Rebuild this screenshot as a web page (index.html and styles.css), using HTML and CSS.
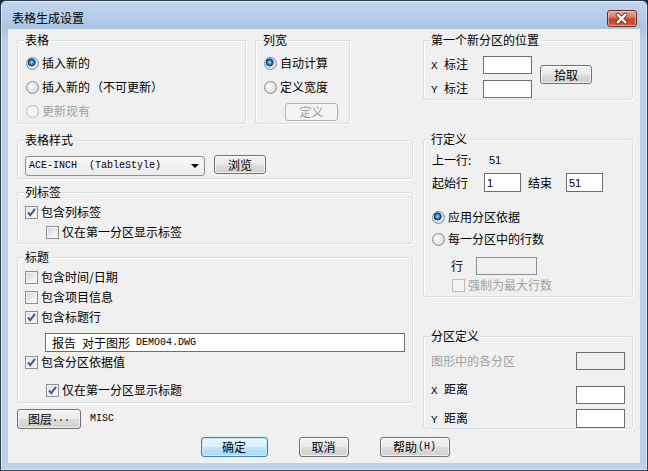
FILE: index.html
```html
<!DOCTYPE html>
<html lang="zh-CN">
<head>
<meta charset="utf-8">
<title>表格生成设置</title>
<link rel="stylesheet" href="styles.css">
</head>
<body>
<div class="window">
  <div class="titlebar">
    <span class="title">表格生成设置</span>
    <div class="close">
      <svg width="30" height="17" viewBox="0 0 30 17">
        <path d="M11 4.5 L19 12.5 M19 4.5 L11 12.5" stroke="#5b2a22" stroke-width="4.2" stroke-linecap="round"/>
        <path d="M11 4.5 L19 12.5 M19 4.5 L11 12.5" stroke="#ffffff" stroke-width="2.4" stroke-linecap="round"/>
      </svg>
    </div>
  </div>
  <div class="client">
    <div class="main">
      <div class="left">
        <div class="toprow">
          <div class="group g-table">
            <span class="legend">表格</span>
            <div class="opt"><span class="radio on"></span>插入新的</div>
            <div class="opt"><span class="radio"></span>插入新的<span class="paren">（不可更新）</span></div>
            <div class="opt dis"><span class="radio"></span>更新现有</div>
          </div>
          <div class="group g-colw">
            <span class="legend">列宽</span>
            <div class="opt"><span class="radio on"></span>自动计算</div>
            <div class="opt"><span class="radio"></span>定义宽度</div>
            <div class="btn btn-def dis-btn">定义</div>
          </div>
        </div>
        <div class="group g-style">
          <span class="legend">表格样式</span>
          <div class="combo"><span class="mono">ACE-INCH  (TableStyle)</span><span class="arrow"></span></div>
          <div class="btn btn-browse">浏览</div>
        </div>
        <div class="group g-collabel">
          <span class="legend">列标签</span>
          <div class="opt"><span class="check on"><svg width="11" height="11" viewBox="0 0 11 11"><path d="M2 5.5 L4.3 8.2 L9 1.8" fill="none" stroke="#3d5b96" stroke-width="2"/></svg></span>包含列标签</div>
          <div class="opt indent"><span class="check"></span>仅在第一分区显示标签</div>
        </div>
        <div class="group g-title">
          <span class="legend">标题</span>
          <div class="opt"><span class="check"></span>包含时间/日期</div>
          <div class="opt"><span class="check"></span>包含项目信息</div>
          <div class="opt"><span class="check on"><svg width="11" height="11" viewBox="0 0 11 11"><path d="M2 5.5 L4.3 8.2 L9 1.8" fill="none" stroke="#3d5b96" stroke-width="2"/></svg></span>包含标题行</div>
          <div class="tb tb-title"><span>报告</span><span class="sp">对于图形</span><span class="mono sp">DEMO04.DWG</span></div>
          <div class="opt opt-basis"><span class="check on"><svg width="11" height="11" viewBox="0 0 11 11"><path d="M2 5.5 L4.3 8.2 L9 1.8" fill="none" stroke="#3d5b96" stroke-width="2"/></svg></span>包含分区依据值</div>
          <div class="opt opt-first indent"><span class="check on"><svg width="11" height="11" viewBox="0 0 11 11"><path d="M2 5.5 L4.3 8.2 L9 1.8" fill="none" stroke="#3d5b96" stroke-width="2"/></svg></span>仅在第一分区显示标题</div>
        </div>
        <div class="layer-row">
          <div class="btn btn-layer">图层<span class="mono">...</span></div>
          <span class="mono misc">MISC</span>
        </div>
      </div>
      <div class="right">
        <div class="group g-pos">
          <span class="legend">第一个新分区的位置</span>
          <div class="pos-grid">
            <div class="lbl"><span class="mono xy">X</span>标注</div>
            <div class="tb"></div>
            <div class="lbl"><span class="mono xy">Y</span>标注</div>
            <div class="tb"></div>
          </div>
          <div class="btn btn-pick">拾取</div>
        </div>
        <div class="group g-rowdef">
          <span class="legend">行定义</span>
          <div class="line"><span class="w57">上一行:</span><span class="num">51</span></div>
          <div class="line range">
            <span class="w52">起始行</span>
            <div class="tb tb-num"><span class="num">1</span></div>
            <span class="w38">结束</span>
            <div class="tb tb-num"><span class="num">51</span></div>
          </div>
          <div class="opt opt-apply"><span class="radio on"></span>应用分区依据</div>
          <div class="opt opt-per"><span class="radio"></span>每一分区中的行数</div>
          <div class="line rows">
            <span class="w25">行</span>
            <div class="tb tb-rows dis-tb"></div>
          </div>
          <div class="opt dis opt-force"><span class="check dis-check"></span>强制为最大行数</div>
        </div>
        <div class="group g-part">
          <span class="legend">分区定义</span>
          <div class="prow p1"><span class="grey">图形中的各分区</span><div class="tb dis-tb2"></div></div>
          <div class="prow p2"><span class="up"><span class="mono xy">X</span>距离</span><div class="tb"></div></div>
          <div class="prow p3"><span><span class="mono xy">Y</span>距离</span><div class="tb"></div></div>
        </div>
      </div>
    </div>
    <div class="actions">
      <div class="btn btn-ok">确定</div>
      <div class="btn btn-cancel">取消</div>
      <div class="btn btn-help">帮助<span class="mono">(H)</span></div>
    </div>
  </div>
</div>
</body>
</html>
```

FILE: styles.css
```css
html, body {
  margin: 0;
  padding: 0;
  background: #1a2a3a;
}
body {
  font-family: "Noto Sans CJK SC", "Noto Sans", sans-serif;
  font-size: 12px;
  line-height: 16px;
  color: #000;
}
.mono {
  font-family: "Liberation Mono", "DejaVu Sans Mono", monospace;
  font-size: 10px;
}
.xy {
  display: inline-block;
  width: 13px;
  font-size: 11px;
}
.num {
  font-family: "Liberation Sans", Arial, sans-serif;
  font-size: 11px;
}
.window {
  width: 648px;
  height: 471px;
  box-sizing: border-box;
  border: 1px solid #34414e;
  border-radius: 6px 6px 0 0;
  background: linear-gradient(#c2d7ef 0px, #a9c4e3 28px, #b9d1ea 40px, #b9d1ea 100%);
  box-shadow: inset 0 0 0 1px rgba(255,255,255,0.45);
  display: flex;
  flex-direction: column;
  padding: 0 7px 7px 7px;
  overflow: hidden;
}
.titlebar {
  height: 28px;
  flex: none;
  display: flex;
  align-items: flex-start;
}
.title {
  margin-top: 9px;
  margin-left: 4px;
  font-size: 12px;
  line-height: 16px;
}
.close {
  margin-left: auto;
  margin-right: 3px;
  margin-top: 9px;
  width: 30px;
  height: 17px;
  box-sizing: border-box;
  border: 1px solid #6b2b22;
  border-radius: 3px;
  background: linear-gradient(#e6a595 0%, #d77e69 40%, #c2432c 55%, #c4553a 85%, #d7795a 100%);
  box-shadow: inset 0 0 0 1px rgba(255,220,210,0.5);
  display: flex;
}
.close svg { margin: -1px 0 0 -1px; }
.client {
  flex: 1;
  background: #f0f0f0;
  padding: 11px 7px 0 9px;
  display: flex;
  flex-direction: column;
}
.main {
  display: flex;
  gap: 10px;
}
.left {
  width: 396px;
  display: flex;
  flex-direction: column;
}
.right {
  width: 210px;
  display: flex;
  flex-direction: column;
}
.toprow {
  display: flex;
  gap: 9px;
}
.group {
  position: relative;
  box-sizing: border-box;
  border: 1px solid #d5dfe5;
  border-radius: 3px;
  box-shadow: inset 1px 1px 0 #fff, 1px 1px 0 #fff;
}
.legend {
  position: absolute;
  top: -9px;
  left: 6px;
  padding: 0 1px;
  background: #f0f0f0;
  line-height: 16px;
  white-space: nowrap;
}
.opt {
  display: flex;
  align-items: center;
  height: 16px;
  white-space: nowrap;
}
.opt.dis { color: #a0a0a0; }
.paren { margin-left: 1px; }
.radio {
  width: 13px;
  height: 13px;
  box-sizing: border-box;
  border: 1px solid #8a8c8e;
  border-radius: 50%;
  margin-right: 3px;
  flex: none;
  background: radial-gradient(circle at 40% 40%, #fdfdfd 0, #e6e6e6 45%, #cfd1d3 100%);
}
.radio.on {
  background:
    radial-gradient(circle at 42% 40%, #bfe8ff 0, #3d93d6 1.6px, #145a9c 3px, #0b3769 3.7px, rgba(11,55,105,0) 4.3px),
    radial-gradient(circle at 40% 40%, #fdfdfd 0, #e6e6e6 45%, #cfd1d3 100%);
}
.opt.dis .radio {
  border-color: #bcbcbc;
  background: #f4f4f4;
}
.check {
  width: 13px;
  height: 13px;
  box-sizing: border-box;
  border: 1px solid #8e8f8f;
  margin-right: 3px;
  flex: none;
  background: linear-gradient(135deg, #cbcfd5 0%, #eef0f2 60%, #f8f8f8 100%);
  box-shadow: inset 0 0 0 1px #f4f4f4;
  display: flex;
  align-items: center;
  justify-content: center;
}
.check.on { background: linear-gradient(135deg, #e4e6ea 0%, #f6f7f8 100%); }
.check.dis-check {
  border-color: #bcbcbc;
  background: #f4f4f4;
  box-shadow: none;
}
.btn {
  box-sizing: border-box;
  border: 1px solid #707070;
  border-radius: 3px;
  background: linear-gradient(#f2f2f2 0%, #ebebeb 48%, #dddddd 52%, #cfcfcf 100%);
  box-shadow: inset 0 0 0 1px rgba(255,255,255,0.7);
  display: flex;
  align-items: center;
  justify-content: center;
  line-height: 16px;
  white-space: nowrap;
  flex: none;
}
.btn.dis-btn {
  border-color: #adb2b5;
  background: #f4f4f4;
  color: #a0a0a0;
  box-shadow: none;
}
/* 表格 group */
.g-table {
  width: 229px;
  height: 84px;
  padding: 14px 0 0 8px;
  display: flex;
  flex-direction: column;
  gap: 8px;
}
/* 列宽 group */
.g-colw {
  width: 95px;
  height: 84px;
  padding: 14px 0 0 8px;
  display: flex;
  flex-direction: column;
  gap: 8px;
}
.btn-def {
  width: 53px;
  height: 18px;
  margin-left: 21px;
}
/* 表格样式 */
.g-style {
  margin-top: 16px;
  height: 39px;
  padding: 15px 0 0 7px;
  display: flex;
  align-items: flex-start;
}
.combo {
  width: 180px;
  height: 20px;
  box-sizing: border-box;
  border: 1px solid #8f8f8f;
  border-radius: 3px;
  background: linear-gradient(#f7f7f7, #ececec);
  display: flex;
  align-items: center;
  padding-left: 3px;
  white-space: pre;
}
.arrow {
  margin-left: auto;
  margin-right: 5px;
  width: 0;
  height: 0;
  border-left: 4px solid transparent;
  border-right: 4px solid transparent;
  border-top: 4px solid #000;
}
.btn-browse {
  width: 52px;
  height: 19px;
  margin-left: 9px;
  margin-top: -1px;
}
/* 列标签 */
.g-collabel {
  margin-top: 13px;
  height: 52px;
  padding: 11px 0 0 7px;
  display: flex;
  flex-direction: column;
  gap: 4px;
}
.indent { margin-left: 21px; }
/* 标题 */
.g-title {
  margin-top: 13px;
  height: 146px;
  padding: 11px 0 0 7px;
  display: flex;
  flex-direction: column;
  gap: 4px;
}
.tb {
  box-sizing: border-box;
  border: 1px solid #6e6e6e;
  background: #fff;
  height: 18px;
  flex: none;
}
.tb-title {
  margin-top: 4px;
  margin-left: 20px;
  width: 360px;
  height: 19px;
  padding-left: 6px;
  line-height: 17px;
  white-space: pre;
  font-size: 12px;
  display: flex;
  align-items: center;
}
.tb-title .sp { margin-left: 6px; }
.opt-basis { margin-top: -2px; }
.opt-first { margin-top: 8px; }
.layer-row {
  margin-top: 6px;
  height: 20px;
  display: flex;
  align-items: center;
}
.btn-layer {
  width: 64px;
  height: 20px;
}
.misc { margin-left: 9px; }
/* 第一个新分区的位置 */
.g-pos {
  height: 60px;
  padding: 15px 0 0 7px;
  display: flex;
  align-items: flex-start;
}
.pos-grid {
  display: grid;
  grid-template-columns: 52px 49px;
  grid-auto-rows: 18px;
  row-gap: 6px;
  align-items: center;
}
.lbl { white-space: pre; }
.btn-pick {
  width: 52px;
  height: 19px;
  margin-left: 8px;
  margin-top: 9px;
}
/* 行定义 */
.g-rowdef {
  margin-top: 39px;
  height: 158px;
  padding: 12px 0 0 8px;
  display: flex;
  flex-direction: column;
}
.line {
  display: flex;
  align-items: center;
  white-space: nowrap;
}
.w57 { width: 57px; }
.w52 { width: 52px; }
.w38 { width: 38px; margin-left: 7px; }
.w25 { width: 25px; }
.range { margin-top: 5px; height: 19px; }
.tb-num {
  width: 37px;
  height: 19px;
  padding-left: 2px;
  display: flex;
  align-items: center;
}
.opt-apply { margin-top: 17px; }
.opt-per { margin-top: 6px; }
.rows {
  margin-top: 10px;
  margin-left: 19px;
  height: 18px;
}
.tb-rows {
  width: 61px;
  height: 18px;
}
.dis-tb {
  background: #f0f0f0;
  border-color: #8e8e8e;
}
.opt-force {
  margin-top: 2px;
  margin-left: 20px;
}
/* 分区定义 */
.g-part {
  margin-top: 39px;
  height: 93px;
  padding: 15px 7px 0 7px;
  display: flex;
  flex-direction: column;
}
.prow {
  display: flex;
  justify-content: space-between;
  align-items: center;
  white-space: pre;
}
.prow .tb { width: 49px; }
.p1 { height: 18px; }
.p2 { height: 18px; margin-top: 16px; }
.p3 { height: 19px; margin-top: 5px; }
.p3 .tb { height: 19px; }
.grey { color: #a0a0a0; }
.dis-tb2 { background: #f0f0f0; }
.up { margin-bottom: 10px; }
/* bottom buttons */
.actions {
  margin-top: 8px;
  display: flex;
  justify-content: center;
  gap: 31px;
}
.actions .btn { height: 20px; }
.btn-ok {
  width: 67px;
  border-color: #3c7fb1;
  background: linear-gradient(#eaf6fd 0%, #d9f0fc 48%, #bee6fd 52%, #a7d9f5 100%);
  box-shadow: inset 0 0 0 1px #c5ecfc;
}
.btn-cancel { width: 50px; }
.btn-help { width: 70px; }
.btn-help .mono { margin-left: 1px; }
```
